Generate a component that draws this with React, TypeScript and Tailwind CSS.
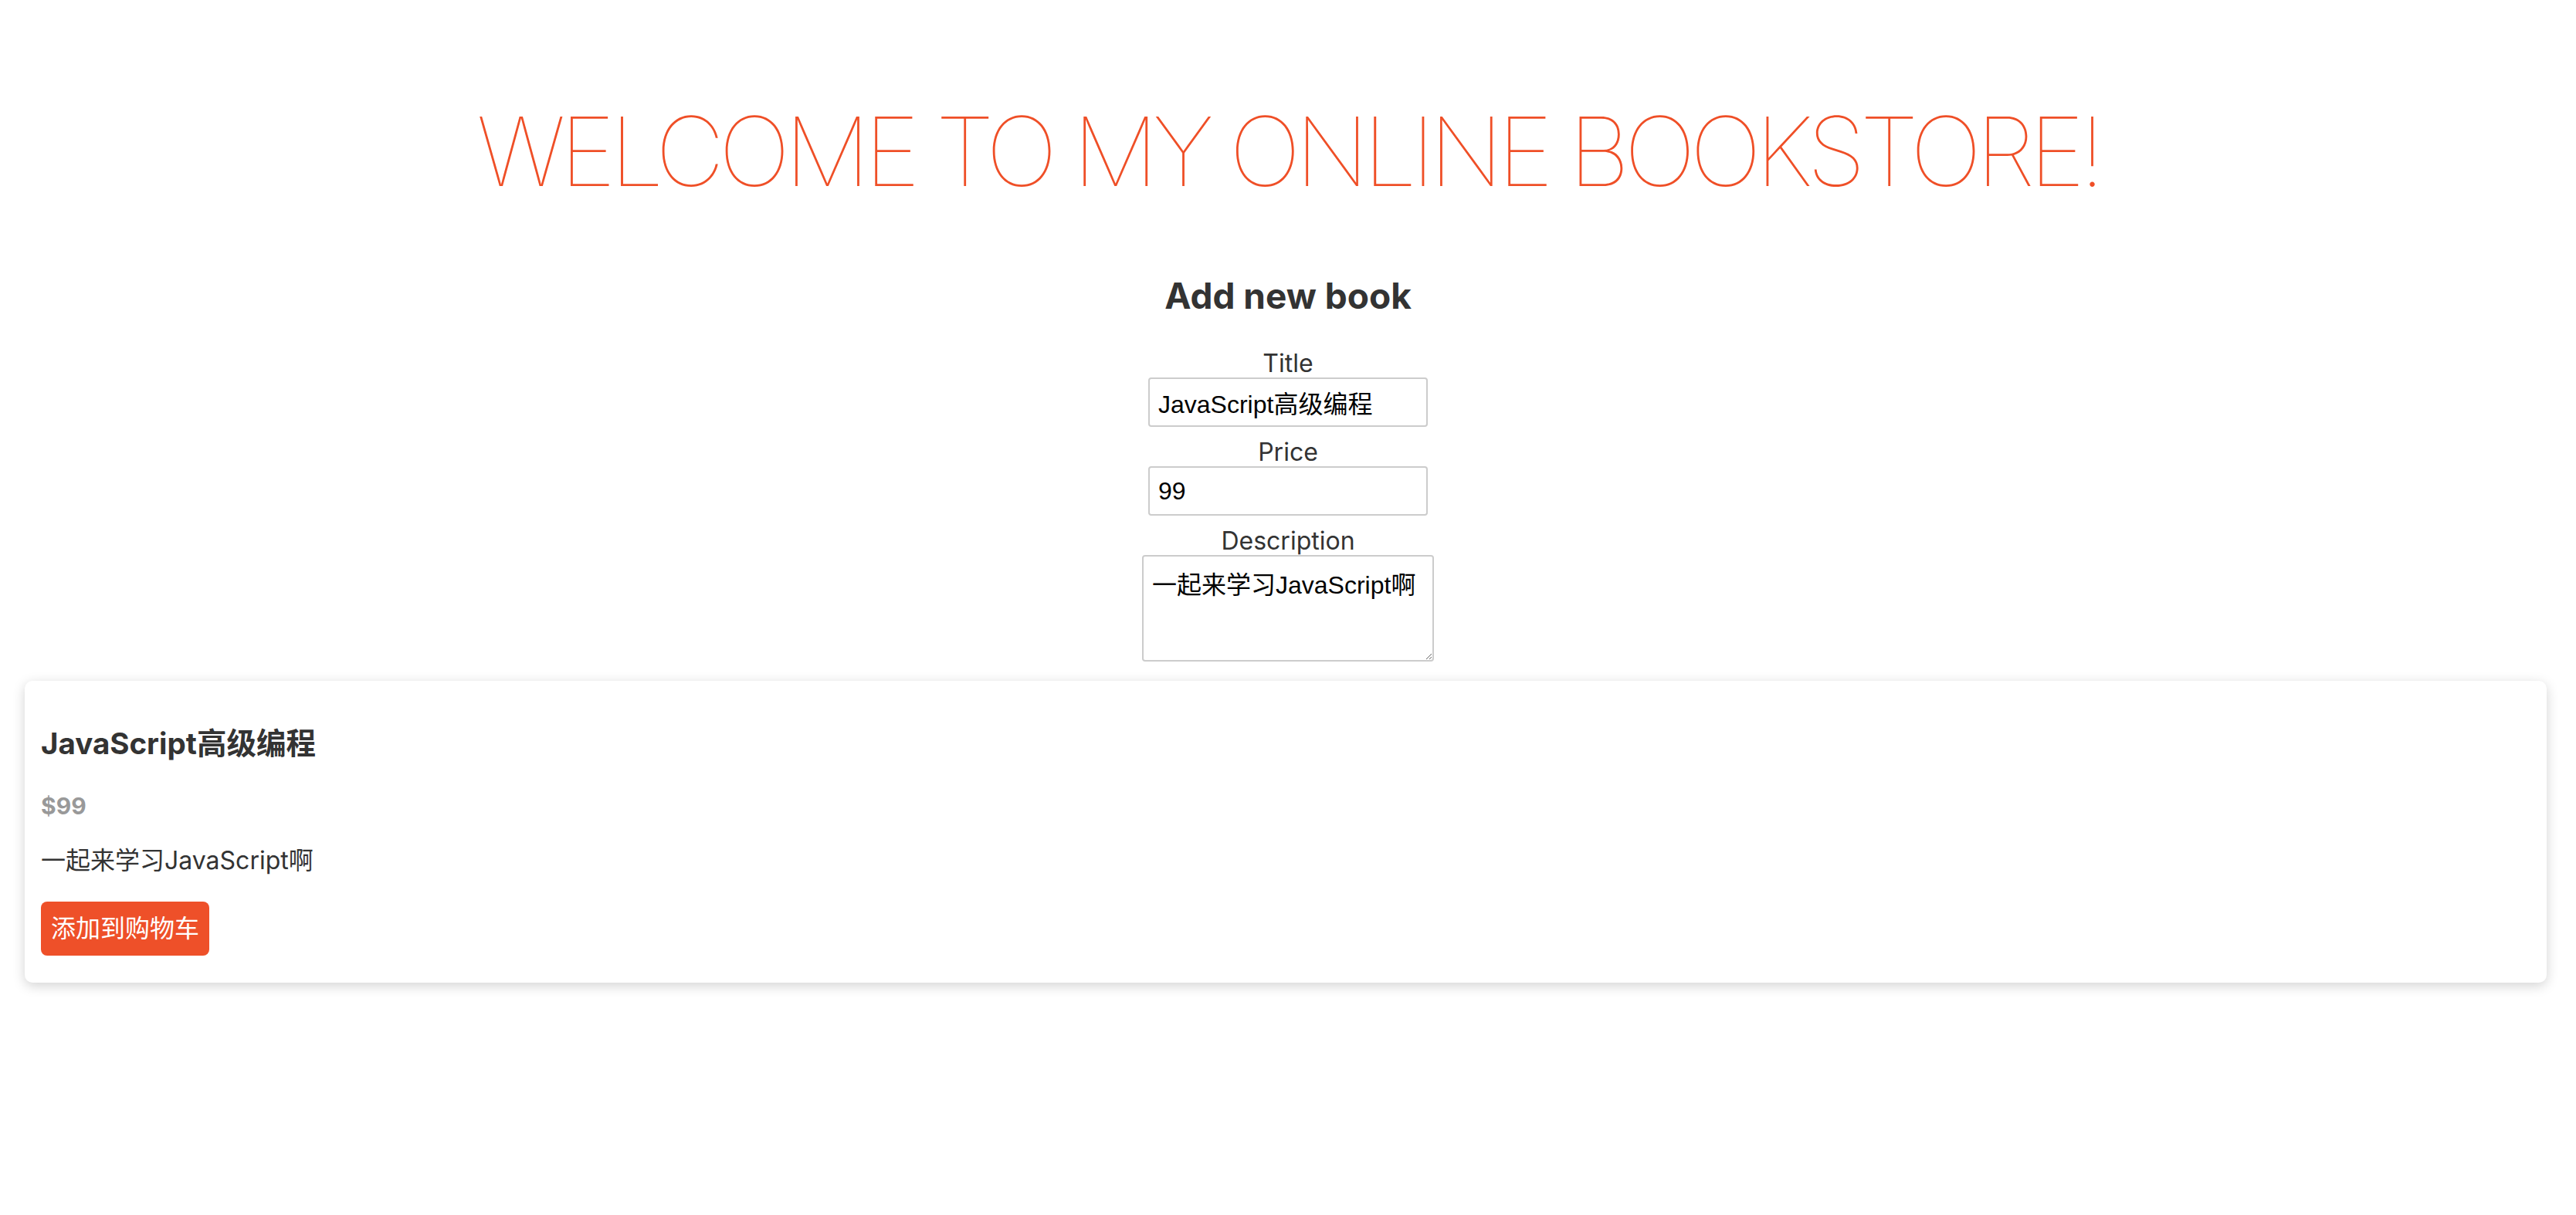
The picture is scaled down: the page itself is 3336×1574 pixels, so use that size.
import React from 'react';

const sans = "font-['Inter','Noto_Sans_CJK_SC',sans-serif]";
const field = "font-['Liberation_Sans','Noto_Sans_CJK_SC',sans-serif]";

export default function App() {
  return (
    <div className={`bg-white pt-[134px] pb-[200px] text-[#333] ${sans}`}>
      <h1 className="text-center text-[124px] leading-none font-thin tracking-[-7.5px] text-[#ef4f27]">
        WELCOME TO MY ONLINE BOOKSTORE!
      </h1>

      <form className="mt-[97px] flex flex-col items-center">
        <h2 className="text-[46px] leading-[56px] font-bold text-[#333]">Add new book</h2>

        <label className="mt-[42px] text-[32px] leading-[36px]">Title</label>
        <input
          className={`h-[64px] w-[362px] rounded-[4px] border-2 border-[#ccc] px-[11px] text-[32px] text-black ${field}`}
          defaultValue="JavaScript高级编程"
        />

        <label className="mt-[15px] text-[32px] leading-[36px]">Price</label>
        <input
          className={`h-[64px] w-[362px] rounded-[4px] border-2 border-[#ccc] px-[11px] text-[32px] text-black ${field}`}
          defaultValue="99"
        />

        <label className="mt-[15px] text-[32px] leading-[36px]">Description</label>
        <textarea
          className={`h-[138px] w-[378px] rounded-[4px] border-2 border-[#ccc] px-[11px] pt-[18px] pb-[8px] text-[32px] leading-[38px] text-black ${field}`}
          defaultValue="一起来学习JavaScript啊"
        />
      </form>

      <div className="ml-[32px] mr-[38px] mt-[25px] rounded-[10px] bg-white px-[21px] pt-[58px] pb-[35px] shadow-[0_4px_16px_rgba(0,0,0,0.18)]">
        <h3 className="text-[38.5px] leading-[46px] font-bold">JavaScript高级编程</h3>
        <div className="mt-[40px] text-[30px] leading-[36px] font-bold text-[#999]">$99</div>
        <p className="mt-[34px] text-[32px] leading-[38px]">一起来学习JavaScript啊</p>
        <button
          type="button"
          className="mt-[34px] flex h-[70px] items-center rounded-[8px] bg-[#ee5029] px-[13px] text-[32px] text-white"
        >
          添加到购物车
        </button>
      </div>
    </div>
  );
}
